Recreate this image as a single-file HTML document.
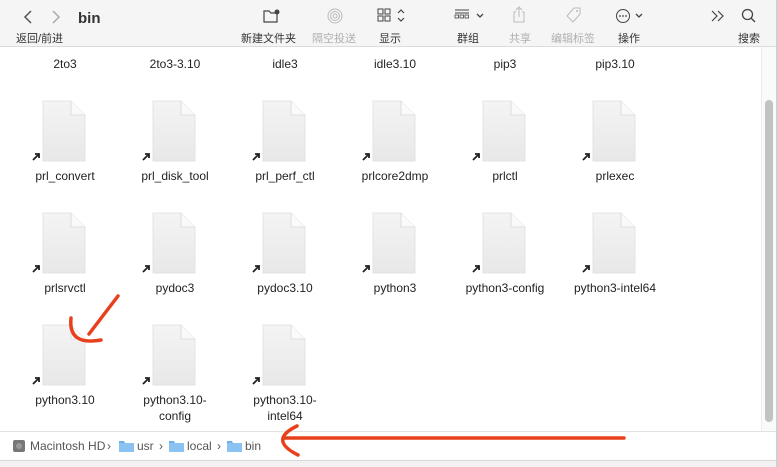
<!DOCTYPE html>
<html><head><meta charset="utf-8"><style>
*{margin:0;padding:0;box-sizing:border-box}
body{width:778px;height:467px;overflow:hidden;background:#fff;font-family:"Liberation Sans","Noto Sans CJK SC",sans-serif;position:relative;color:#222}
.tb{position:absolute;left:0;top:0;width:778px;height:47px;background:#f6f5f5;border-bottom:1px solid #dcdcdc}
.t{position:absolute;font-size:11px;color:#333;white-space:nowrap}
.g{color:#b0b0b0}
.ic{position:absolute}
.lab{position:absolute;width:110px;text-align:center;font-size:12px;color:#222;line-height:16px}
.path{position:absolute;left:0;top:431px;width:776px;height:29px;border-top:1px solid #e2e2e2;background:#fff;font-size:12px;color:#555}
.path span{position:absolute;top:7px;white-space:nowrap}
.bot{position:absolute;left:0;top:460px;width:778px;height:7px;background:#f3f1f1;border-top:1px solid #d8d8d8}
</style></head><body>
<div class="tb">
<svg class="ic" style="left:22px;top:9px" width="40" height="16"><path d="M9 2 L3 8 L9 14" fill="none" stroke="#555" stroke-width="1.5"/><path d="M31 2 L37 8 L31 14" fill="none" stroke="#aaa" stroke-width="1.5"/></svg>
<div class="t" style="left:78px;top:10px;font-size:15px;font-weight:bold;color:#333">bin</div>
<div class="t" style="left:16px;top:30px">返回/前进</div>
<svg class="ic" style="left:262px;top:8px" width="20" height="16"><path d="M2 3h5l2 2h6v9H2z" fill="none" stroke="#444" stroke-width="1.2"/><circle cx="15" cy="4" r="2.5" fill="#444"/></svg>
<div class="t" style="left:241px;top:30px">新建文件夹</div>
<svg class="ic" style="left:326px;top:7px" width="18" height="18"><circle cx="9" cy="9" r="7" fill="none" stroke="#bbb"/><circle cx="9" cy="9" r="4.5" fill="none" stroke="#bbb"/><circle cx="9" cy="9" r="2" fill="none" stroke="#bbb"/></svg>
<div class="t g" style="left:312px;top:30px">隔空投送</div>
<svg class="ic" style="left:377px;top:8px" width="30" height="16"><rect x="1" y="1" width="5" height="5" fill="none" stroke="#444"/><rect x="8" y="1" width="5" height="5" fill="none" stroke="#444"/><rect x="1" y="8" width="5" height="5" fill="none" stroke="#444"/><rect x="8" y="8" width="5" height="5" fill="none" stroke="#444"/><path d="M21 5l3-3 3 3M21 10l3 3 3-3" fill="none" stroke="#444" stroke-width="1.2"/></svg>
<div class="t" style="left:379px;top:30px">显示</div>
<svg class="ic" style="left:454px;top:9px" width="32" height="14"><path d="M1 1h14M1 4h14" stroke="#444"/><rect x="1" y="6" width="3.5" height="3" fill="none" stroke="#444" stroke-width=".8"/><rect x="6" y="6" width="3.5" height="3" fill="none" stroke="#444" stroke-width=".8"/><rect x="11" y="6" width="3.5" height="3" fill="none" stroke="#444" stroke-width=".8"/><path d="M23 5l3 3 3-3" fill="none" stroke="#444" stroke-width="1.3"/></svg>
<div class="t" style="left:457px;top:30px">群组</div>
<svg class="ic" style="left:512px;top:6px" width="14" height="18"><path d="M4 6H2v10h10V6h-2M7 1v10M4 4l3-3 3 3" fill="none" stroke="#bbb"/></svg>
<div class="t g" style="left:509px;top:30px">共享</div>
<svg class="ic" style="left:565px;top:6px" width="18" height="18"><path d="M9 2h6v6l-7 8-6-6z" fill="none" stroke="#bbb"/><circle cx="12" cy="5" r="1" fill="#bbb"/></svg>
<div class="t g" style="left:551px;top:30px">编辑标签</div>
<svg class="ic" style="left:615px;top:8px" width="30" height="16"><circle cx="8" cy="8" r="6.5" fill="none" stroke="#444"/><circle cx="5" cy="8" r=".9" fill="#444"/><circle cx="8" cy="8" r=".9" fill="#444"/><circle cx="11" cy="8" r=".9" fill="#444"/><path d="M21 6l3 3 3-3" fill="none" stroke="#444" stroke-width="1.3"/></svg>
<div class="t" style="left:618px;top:30px">操作</div>
<svg class="ic" style="left:711px;top:10px" width="14" height="12"><path d="M1 1l5 5-5 5M7 1l5 5-5 5" fill="none" stroke="#444" stroke-width="1.2"/></svg>
<svg class="ic" style="left:741px;top:8px" width="16" height="16"><circle cx="6.5" cy="6.5" r="5" fill="none" stroke="#444" stroke-width="1.3"/><path d="M10 10l4 4" stroke="#444" stroke-width="1.4"/></svg>
<div class="t" style="left:738px;top:30px">搜索</div>
</div>

<div class="lab" style="left:10px;top:56px">2to3</div>
<div class="lab" style="left:120px;top:56px">2to3-3.10</div>
<div class="lab" style="left:230px;top:56px">idle3</div>
<div class="lab" style="left:340px;top:56px">idle3.10</div>
<div class="lab" style="left:450px;top:56px">pip3</div>
<div class="lab" style="left:560px;top:56px">pip3.10</div>

<svg width="0" height="0" style="position:absolute"><defs>
<linearGradient id="gd" x1="0" y1="0" x2="0" y2="1"><stop offset="0" stop-color="#f4f4f4"/><stop offset="1" stop-color="#e8e8e8"/></linearGradient>
<symbol id="d" viewBox="0 0 55 62"><path d="M12 1h28l14 14v46H12z" fill="url(#gd)" stroke="#dedede" stroke-width=".8"/><path d="M40 1v14h14" fill="#fafafa" stroke="#d8d8d8" stroke-width=".8"/><path d="M2 60l6-6M4 54h4v4" fill="none" stroke="#222" stroke-width="1.8"/></symbol>
</defs></svg>

<svg class="ic" style="left:31px;top:100px" width="55" height="62"><use href="#d"/></svg>
<svg class="ic" style="left:141px;top:100px" width="55" height="62"><use href="#d"/></svg>
<svg class="ic" style="left:251px;top:100px" width="55" height="62"><use href="#d"/></svg>
<svg class="ic" style="left:361px;top:100px" width="55" height="62"><use href="#d"/></svg>
<svg class="ic" style="left:471px;top:100px" width="55" height="62"><use href="#d"/></svg>
<svg class="ic" style="left:581px;top:100px" width="55" height="62"><use href="#d"/></svg>
<div class="lab" style="left:10px;top:168px">prl_convert</div>
<div class="lab" style="left:120px;top:168px">prl_disk_tool</div>
<div class="lab" style="left:230px;top:168px">prl_perf_ctl</div>
<div class="lab" style="left:340px;top:168px">prlcore2dmp</div>
<div class="lab" style="left:450px;top:168px">prlctl</div>
<div class="lab" style="left:560px;top:168px">prlexec</div>

<svg class="ic" style="left:31px;top:212px" width="55" height="62"><use href="#d"/></svg>
<svg class="ic" style="left:141px;top:212px" width="55" height="62"><use href="#d"/></svg>
<svg class="ic" style="left:251px;top:212px" width="55" height="62"><use href="#d"/></svg>
<svg class="ic" style="left:361px;top:212px" width="55" height="62"><use href="#d"/></svg>
<svg class="ic" style="left:471px;top:212px" width="55" height="62"><use href="#d"/></svg>
<svg class="ic" style="left:581px;top:212px" width="55" height="62"><use href="#d"/></svg>
<div class="lab" style="left:10px;top:280px">prlsrvctl</div>
<div class="lab" style="left:120px;top:280px">pydoc3</div>
<div class="lab" style="left:230px;top:280px">pydoc3.10</div>
<div class="lab" style="left:340px;top:280px">python3</div>
<div class="lab" style="left:450px;top:280px">python3-config</div>
<div class="lab" style="left:560px;top:280px">python3-intel64</div>

<svg class="ic" style="left:31px;top:324px" width="55" height="62"><use href="#d"/></svg>
<svg class="ic" style="left:141px;top:324px" width="55" height="62"><use href="#d"/></svg>
<svg class="ic" style="left:251px;top:324px" width="55" height="62"><use href="#d"/></svg>
<div class="lab" style="left:10px;top:392px">python3.10</div>
<div class="lab" style="left:120px;top:392px">python3.10-<br>config</div>
<div class="lab" style="left:230px;top:392px">python3.10-<br>intel64</div>

<div style="position:absolute;left:761px;top:47px;width:15px;height:384px;background:#fafafa;border-left:1px solid #ececec"></div>
<div style="position:absolute;left:765px;top:100px;width:8px;height:322px;border-radius:4px;background:#c2c2c2"></div>

<div class="path">
<svg class="ic" style="left:12px;top:7px" width="14" height="14"><rect x="1" y="1" width="12" height="12" rx="2" fill="#777"/><circle cx="7" cy="7" r="3" fill="#999"/></svg>
<span style="left:30px">Macintosh HD</span><span style="left:107px">›</span>
<svg class="ic" style="left:119px;top:8px" width="15" height="12"><path d="M0 1h5l1 2h9v9H0z" fill="#6fb0ea"/><rect x="0" y="3" width="15" height="9" fill="#8ac3f2"/></svg>
<span style="left:137px">usr</span><span style="left:159px">›</span>
<svg class="ic" style="left:169px;top:8px" width="15" height="12"><path d="M0 1h5l1 2h9v9H0z" fill="#6fb0ea"/><rect x="0" y="3" width="15" height="9" fill="#8ac3f2"/></svg>
<span style="left:187px">local</span><span style="left:217px">›</span>
<svg class="ic" style="left:227px;top:8px" width="15" height="12"><path d="M0 1h5l1 2h9v9H0z" fill="#6fb0ea"/><rect x="0" y="3" width="15" height="9" fill="#8ac3f2"/></svg>
<span style="left:245px">bin</span>
</div>
<div class="bot"></div>
<div style="position:absolute;left:776px;top:0;width:2px;height:467px;background:#d0d0d0"></div>

<svg class="ic" style="left:0;top:0" width="778" height="467"><path d="M118 296 L89 334 M71 318 Q68 346 101 340" fill="none" stroke="#e8401c" stroke-width="3.5" stroke-linecap="round"/><path d="M624 438 L285 438 M297 426 Q268 440 298 455" fill="none" stroke="#e8401c" stroke-width="3.5" stroke-linecap="round"/></svg>
</body></html>
